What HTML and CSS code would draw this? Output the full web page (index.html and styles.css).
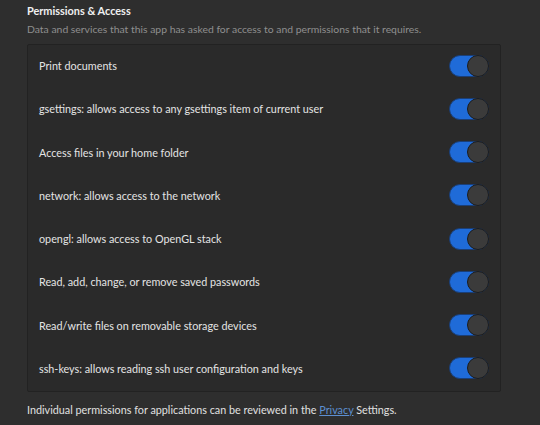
FILE: index.html
```html
<!DOCTYPE html>
<html>
<head>
<meta charset="utf-8">
<link rel="stylesheet" href="styles.css">
</head>
<body>
<div class="page">
  <h2 class="title">Permissions &amp; Access</h2>
  <p class="subtitle">Data and services that this app has asked for access to and permissions that it requires.</p>
  <div class="card">
    <div class="row"><span class="label">Print documents</span><span class="switch"><span class="knob"></span></span></div>
    <div class="row"><span class="label">gsettings: allows access to any gsettings item of current user</span><span class="switch"><span class="knob"></span></span></div>
    <div class="row"><span class="label">Access files in your home folder</span><span class="switch"><span class="knob"></span></span></div>
    <div class="row"><span class="label">network: allows access to the network</span><span class="switch"><span class="knob"></span></span></div>
    <div class="row"><span class="label">opengl: allows access to OpenGL stack</span><span class="switch"><span class="knob"></span></span></div>
    <div class="row"><span class="label">Read, add, change, or remove saved passwords</span><span class="switch"><span class="knob"></span></span></div>
    <div class="row"><span class="label">Read/write files on removable storage devices</span><span class="switch"><span class="knob"></span></span></div>
    <div class="row"><span class="label">ssh-keys: allows reading ssh user configuration and keys</span><span class="switch"><span class="knob"></span></span></div>
  </div>
  <p class="footer">Individual permissions for applications can be reviewed in the <a class="link" href="#">Privacy</a> Settings.</p>
</div>
</body>
</html>
```
FILE: styles.css
```css
html, body {
  margin: 0;
  padding: 0;
  background: #2e2e2e;
}
body {
  font-family: Lato, "Liberation Sans", sans-serif;
  color: #e6e6e6;
  width: 540px;
  height: 425px;
  overflow: hidden;
}
.page {
  padding: 3px 0 0 27px;
  white-space: nowrap;
}
.title {
  margin: 0;
  font-size: 10.9px;
  font-weight: bold;
  line-height: 16px;
  color: #f0f0f0;
}
.subtitle {
  margin: 2px 0 0 0;
  font-size: 10.4px;
  line-height: 16px;
  color: #8f8f8f;
}
.card {
  margin-top: 7px;
  width: 472px;
  background: #2a2a2a;
  border: 1px solid #222;
  border-radius: 2px;
  display: flex;
  flex-direction: column;
}
.row {
  height: 43.25px;
  display: flex;
  align-items: center;
  justify-content: space-between;
  padding: 0 11px 0 11px;
}
.label {
  font-size: 10.8px;
  color: #e4e4e4;
  position: relative;
  top: -1px;
}
.switch {
  width: 40px;
  height: 22px;
  border-radius: 11px;
  background: #1f6bd8;
  box-sizing: border-box;
  border: 1px solid #1a3f78;
  display: flex;
  justify-content: flex-end;
  align-items: center;
  position: relative;
  top: -1px;
}
.knob {
  width: 22px;
  height: 22px;
  border-radius: 50%;
  background: #3b3b3b;
  box-sizing: border-box;
  border: 1px solid #1c1c1c;
  margin-right: -1px;
}
.footer {
  margin: 10px 0 0 0;
  font-size: 10.8px;
  line-height: 16px;
  color: #e0e0e0;
}
.link {
  color: #5d8fd0;
  text-decoration: underline;
}
```
